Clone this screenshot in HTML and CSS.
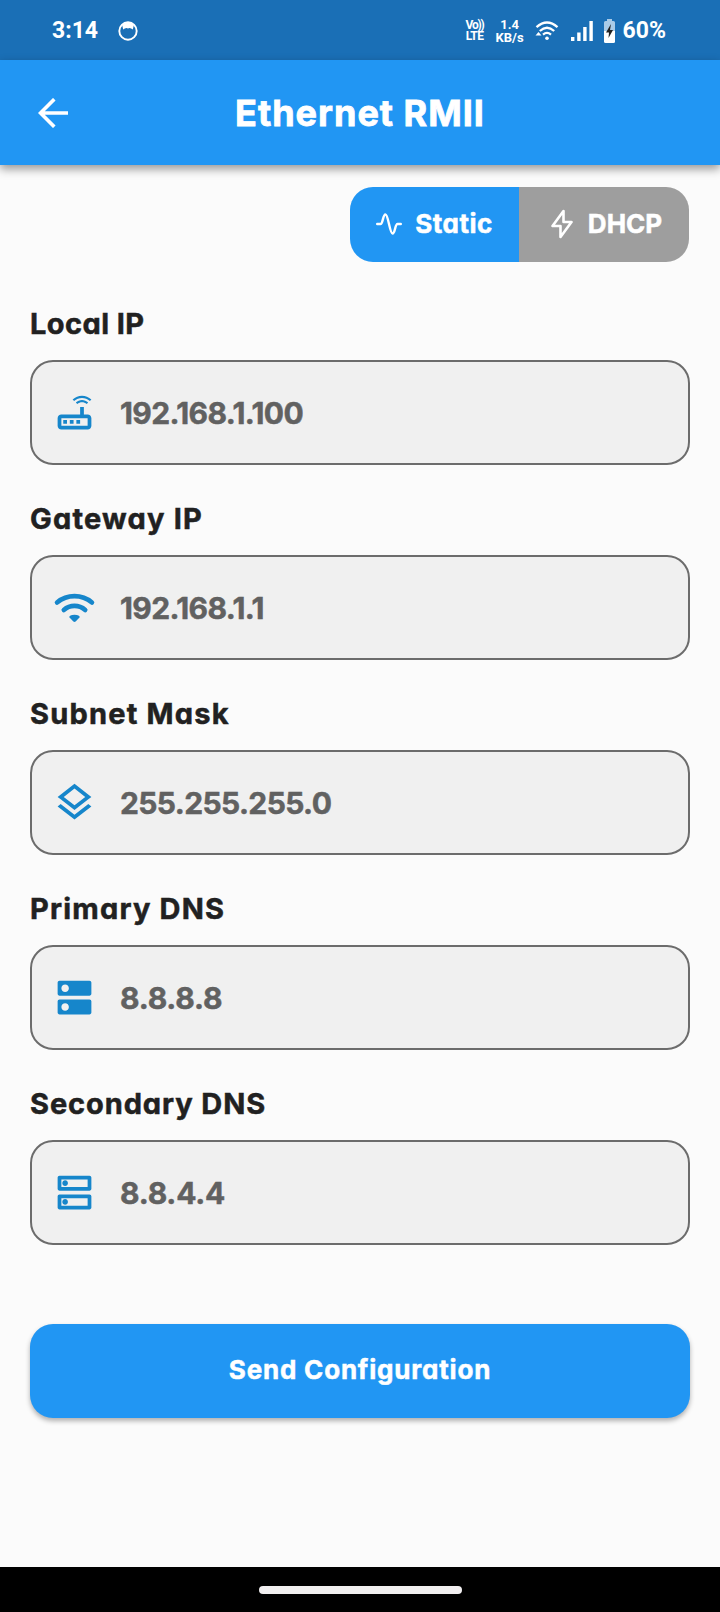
FILE: index.html
```html
<!DOCTYPE html>
<html lang="en">
<head>
    <meta charset="UTF-8">
    <meta name="viewport" content="width=device-width, initial-scale=1.0">
    <title>Ethernet RMII</title>
    <link rel="stylesheet" href="styles.css">
</head>
<body>
    <!-- Status bar -->
    <div class="status-bar">
        <span class="time">3:14</span>
        <svg class="face" viewBox="0 0 20 20">
            <circle cx="10" cy="10" r="8.7" fill="none" stroke="#fff" stroke-width="1.9"/>
            <path d="M4 3.5Q10-.5 16 3.5L14.8 8.6Q12.5 6.4 10 7.4 7.5 6.4 5.2 8.6Z" fill="#fff"/>
        </svg>
        <div class="status-right">
            <div class="volte"><span class="vo">Vo))</span><span>LTE</span></div>
            <div class="speed"><span>1.4</span><span>KB/s</span></div>
            <svg class="status-wifi" viewBox="0 0 24 20" fill="none" stroke="#fff" stroke-width="2.3">
                <path d="M1.5 6.2Q12-3.2 22.5 6.2M4.8 10Q12 3.6 19.2 10M8 13.6Q12 10.2 16 13.6"/>
                <circle cx="12" cy="17.3" r="1.8" fill="#fff" stroke="none"/>
                <path d="M.5 14.5L3.5 11 6.5 14.5Z" fill="#fff" stroke="none"/>
            </svg>
            <svg class="signal" viewBox="0 0 22 20" fill="#fff">
                <path d="M0 16h3.4v4H0zM6.2 11.5h3.4V20H6.2zM12.2 6h3.4v14h-3.4zM18.4 0h3.4v20h-3.4z"/>
            </svg>
            <svg class="battery" viewBox="0 0 11 24">
                <path d="M3 0h5v2H3zM1.5 2h8Q11 2 11 3.5V12H0V3.5Q0 2 1.5 2Z" fill="#a9cbe8"/>
                <path d="M0 12h11v10.5Q11 24 9.5 24h-8Q0 24 0 22.5Z" fill="#fff"/>
                <path d="M7 5L2 13.5h3L4.5 19 9 11H6Z" fill="#222"/>
            </svg>
            <span class="percent">60%</span>
        </div>
    </div>

    <header class="app-bar">
        <svg class="back" viewBox="0 0 30 30" fill="none" stroke="#fff" stroke-width="3.6">
            <path d="M30 15H3M16.3 1.2L2.5 15l13.8 13.8"/>
        </svg>
        <h1>Ethernet RMII</h1>
    </header>

    <main>
        <div class="toggle">
            <button class="toggle-btn active">
                <svg class="activity" viewBox="0 0 26 22" fill="none" stroke="#fff" stroke-width="2.4" stroke-linecap="round" stroke-linejoin="round">
                    <path d="M1.2 11H4.5C7 11 6.8 1.5 9.5 1.5S13.8 20.5 16.5 20.5 19 11 21.5 11H24.8"/>
                </svg>
                <span>Static</span>
            </button>
            <button class="toggle-btn dhcp">
                <svg class="bolt" viewBox="0 0 22 30" fill="none" stroke="#fff" stroke-width="2.6" stroke-linejoin="round">
                    <path d="M12.5 2L1.5 17H9.5V28L20.5 13H12.5Z"/>
                </svg>
                <span>DHCP</span>
            </button>
        </div>

        <div class="field">
            <label class="local">Local IP</label>
            <div class="input">
                <svg viewBox="0 0 24 24"><path d="M19 13h-2V9h-2v4H5c-1.1 0-2 .9-2 2v4c0 1.1.9 2 2 2h14c1.1 0 2-.9 2-2v-4c0-1.1-.9-2-2-2zm0 6H5v-4h14v4zM6 16h2v2H6zm3.5 0h2v2h-2zm3.5 0h2v2h-2zM20.2 5.9l.8-.8C19.6 3.7 17.8 3 16 3s-3.6.7-5 2.1l.8.8C13 4.8 14.5 4.2 16 4.2s3 .6 4.2 1.7zm-.9.8c-.9-.9-2.1-1.4-3.3-1.4s-2.4.5-3.3 1.4l.8.8c.7-.7 1.6-1 2.5-1s1.8.3 2.5 1l.8-.8z"/></svg>
                <span>192.168.1.100</span>
            </div>
        </div>

        <div class="field">
            <label>Gateway IP</label>
            <div class="input">
                <svg viewBox="0 0 24 24">
                    <path d="M2.7 9.3A14.6 14.6 0 0 1 21.3 9.3M6.3 13.3A8.7 8.7 0 0 1 17.7 13.3" fill="none" stroke="#1686cb" stroke-width="2.5" stroke-linecap="round"/>
                    <path d="M9.2 17.2Q9.2 16 12 15.8 14.8 16 14.8 17.2L12.6 19.5Q12 20 11.4 19.5Z"/>
                </svg>
                <span>192.168.1.1</span>
            </div>
        </div>

        <div class="field">
            <label>Subnet Mask</label>
            <div class="input">
                <svg viewBox="0 0 24 24"><path d="M11.99 18.54l-7.37-5.73L3 14.07l9 7 9-7-1.63-1.27-7.38 5.74zM12 16l7.36-5.73L21 9l-9-7-9 7 1.63 1.27L12 16zm0-11.47L17.74 9 12 13.47 6.26 9 12 4.53z"/></svg>
                <span>255.255.255.0</span>
            </div>
        </div>

        <div class="field">
            <label>Primary DNS</label>
            <div class="input short">
                <svg viewBox="0 0 24 24"><path d="M20 13H4c-.55 0-1 .45-1 1v6c0 .55.45 1 1 1h16c.55 0 1-.45 1-1v-6c0-.55-.45-1-1-1zM7 19c-1.1 0-2-.9-2-2s.9-2 2-2 2 .9 2 2-.9 2-2 2zM20 3H4c-.55 0-1 .45-1 1v6c0 .55.45 1 1 1h16c.55 0 1-.45 1-1V4c0-.55-.45-1-1-1zM7 9c-1.1 0-2-.9-2-2s.9-2 2-2 2 .9 2 2-.9 2-2 2z"/></svg>
                <span>8.8.8.8</span>
            </div>
        </div>

        <div class="field">
            <label class="secondary">Secondary DNS</label>
            <div class="input short">
                <svg viewBox="0 0 24 24"><path d="M19 15v4H5v-4h14m1-2H4c-.55 0-1 .45-1 1v6c0 .55.45 1 1 1h16c.55 0 1-.45 1-1v-6c0-.55-.45-1-1-1zM7 18.5c-.82 0-1.5-.67-1.5-1.5s.68-1.5 1.5-1.5 1.5.67 1.5 1.5-.67 1.5-1.5 1.5zM19 5v4H5V5h14m1-2H4c-.55 0-1 .45-1 1v6c0 .55.45 1 1 1h16c.55 0 1-.45 1-1V4c0-.55-.45-1-1-1zM7 8.5c-.82 0-1.5-.67-1.5-1.5S6.18 5.5 7 5.5s1.5.68 1.5 1.5S7.83 8.5 7 8.5z"/></svg>
                <span>8.8.4.4</span>
            </div>
        </div>

        <button class="send">Send Configuration</button>
    </main>

    <div class="nav-bar"><div class="nav-pill"></div></div>
</body>
</html>
```

FILE: styles.css
```css
* {
    box-sizing: border-box;
}
body {
    margin: 0;
    height: 1612px;
    display: flex;
    flex-direction: column;
    background: #fbfbfb;
    font-family: Inter, sans-serif;
    font-feature-settings: "cv11";
    font-weight: 700;
}
svg {
    display: block;
    flex: none;
}

/* Status bar */
.status-bar {
    height: 60px;
    padding: 2px 54px 0 52px;
    display: flex;
    align-items: center;
    background: #1a6fb6;
    color: #fff;
    font-family: Roboto, sans-serif;
}
.time {
    font-size: 23px;
    line-height: 26px;
}
.face {
    width: 20px;
    height: 20px;
    margin-left: 20px;
}
.status-right {
    margin-left: auto;
    display: flex;
    align-items: center;
}
.volte,
.speed {
    display: flex;
    flex-direction: column;
    align-items: center;
    font-size: 12px;
    line-height: 11px;
    letter-spacing: -0.6px;
}
.vo {
    letter-spacing: -1.2px;
}
.speed {
    font-size: 13px;
    line-height: 13px;
    letter-spacing: 0;
    margin-left: 12px;
}
.status-wifi {
    width: 24px;
    height: 20px;
    margin-left: 11px;
}
.signal {
    width: 22px;
    height: 20px;
    margin-left: 12px;
}
.battery {
    width: 11px;
    height: 24px;
    margin-left: 11px;
}
.percent {
    font-size: 23px;
    line-height: 26px;
    margin-left: 8px;
}

/* App bar */
.app-bar {
    height: 105px;
    padding: 0 38px;
    display: flex;
    align-items: center;
    background: #2196f3;
    color: #fff;
    box-shadow: 0 4px 9px rgba(0, 0, 0, 0.4);
}
.back {
    width: 30px;
    height: 30px;
}
.app-bar h1 {
    flex: 1;
    margin: 0 30px 0 0;
    text-align: center;
    font-size: 36px;
    line-height: 50px;
    letter-spacing: 1px;
    -webkit-text-stroke: 0.8px;
}

main {
    flex: 1;
    padding: 22px 30px 0;
    -webkit-text-stroke: 0.5px;
}

/* Static / DHCP switch */
.toggle {
    width: 339px;
    height: 75px;
    margin: 0 1px 42px auto;
    display: flex;
    border-radius: 23px;
    overflow: hidden;
}
.toggle-btn {
    width: 170px;
    padding: 0 0 2px;
    border: none;
    display: flex;
    align-items: center;
    justify-content: center;
    gap: 13px;
    background: #9e9e9e;
    color: #fff;
    font: inherit;
    font-feature-settings: inherit;
    font-size: 26px;
}
.toggle-btn.active {
    width: 169px;
    background: #2196f3;
    letter-spacing: 0.5px;
}
.toggle-btn.dhcp {
    gap: 15px;
    padding-left: 5px;
}
.activity {
    width: 26px;
    height: 22px;
}
.bolt {
    width: 22px;
    height: 30px;
}

/* Fields */
.field {
    margin-bottom: 34px;
}
.field label {
    display: block;
    margin-bottom: 16px;
    font-size: 29px;
    line-height: 40px;
    letter-spacing: 1.2px;
    color: #212121;
}
.field .local {
    letter-spacing: 0.4px;
}
.field .secondary {
    letter-spacing: 0.9px;
}
.input {
    height: 105px;
    padding-left: 20px;
    display: flex;
    align-items: center;
    gap: 23px;
    border: 2px solid #6c6c6c;
    border-radius: 23px;
    background: #f0f0f0;
    font-size: 30px;
    letter-spacing: -0.6px;
    color: #616161;
}
.input.short {
    letter-spacing: -0.2px;
}
.input svg {
    width: 45px;
    height: 45px;
    fill: #1686cb;
}

.send {
    width: 100%;
    height: 94px;
    margin-top: 45px;
    padding: 0 0 4px;
    border: none;
    border-radius: 23px;
    background: #2196f3;
    box-shadow: 0 3px 5px rgba(0, 0, 0, 0.3);
    color: #fff;
    font: inherit;
    font-feature-settings: inherit;
    font-size: 26px;
    letter-spacing: 0.8px;
}

/* System navigation */
.nav-bar {
    height: 45px;
    display: flex;
    align-items: center;
    justify-content: center;
    background: #000;
}
.nav-pill {
    width: 203px;
    height: 8px;
    border-radius: 4px;
    background: #f1eff0;
}
```
